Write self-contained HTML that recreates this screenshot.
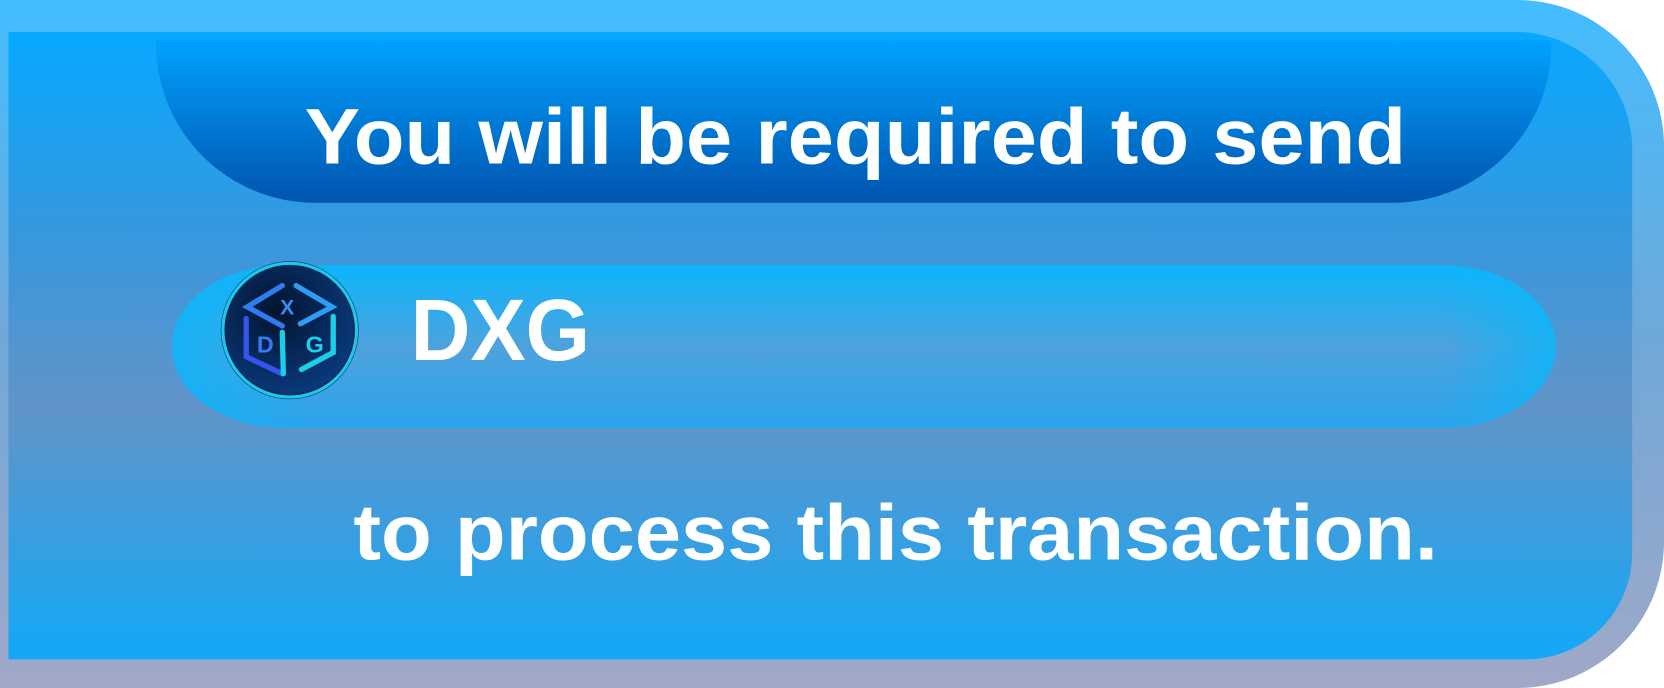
<!DOCTYPE html>
<html><head><meta charset="utf-8"><style>
html,body{margin:0;padding:0;width:1664px;height:688px;overflow:hidden;background:#fff}
svg{display:block}
</style></head><body>
<svg width="1664" height="688" viewBox="0 0 1568 648" preserveAspectRatio="none" xmlns="http://www.w3.org/2000/svg">
<defs>
<linearGradient id="outer" x1="0" y1="0" x2="0" y2="1">
<stop offset="0" stop-color="#43bdff"/><stop offset="0.5" stop-color="#70a8d8"/><stop offset="1" stop-color="#a0a8c8"/>
</linearGradient>
<linearGradient id="inner" x1="0" y1="0" x2="0" y2="1">
<stop offset="0" stop-color="#07a8ff"/><stop offset="0.35" stop-color="#3a97dc"/><stop offset="0.6" stop-color="#6194c8"/><stop offset="1" stop-color="#12a8f8"/>
</linearGradient>
<linearGradient id="top" x1="0" y1="0" x2="0" y2="1">
<stop offset="0" stop-color="#00a2ff"/><stop offset="1" stop-color="#0054ae"/>
</linearGradient>
<linearGradient id="pill" x1="0" y1="0" x2="0" y2="1">
<stop offset="0" stop-color="#0bb5fc"/><stop offset="0.5" stop-color="#4ea2dc"/><stop offset="1" stop-color="#2aa4ec"/>
</linearGradient>
<linearGradient id="pillL" x1="0" y1="0" x2="1" y2="0">
<stop offset="0" stop-color="#0ab6fc" stop-opacity="0.8"/><stop offset="0.1" stop-color="#0ab6fc" stop-opacity="0"/><stop offset="0.92" stop-color="#0ab6fc" stop-opacity="0"/><stop offset="1" stop-color="#0ab6fc" stop-opacity="0.8"/>
</linearGradient>
<radialGradient id="coin" cx="0.4" cy="0.35" r="0.7">
<stop offset="0" stop-color="#03142e"/><stop offset="1" stop-color="#0a3a80"/>
</radialGradient>
</defs>
<path d="M0 0 H1430 A138 138 0 0 1 1568 138 V510 A138 138 0 0 1 1430 648 H0 Z" fill="url(#outer)"/>
<path d="M8 30 H1428 A110 110 0 0 1 1538 140 V521 A100 100 0 0 1 1438 621 H8 Z" fill="url(#inner)"/>
<path d="M147 38 H1462 V42 A150 150 0 0 1 1312 191 H297 A150 150 0 0 1 147 42 Z" fill="url(#top)"/>
<rect x="162" y="250" width="1304" height="153" rx="105" ry="77" fill="url(#pill)"/>
<rect x="162" y="250" width="1304" height="153" rx="105" ry="77" fill="url(#pillL)"/>
<g font-family="Liberation Sans, sans-serif" font-weight="bold" fill="#fff">
<text x="287" y="154" font-size="74" textLength="1038" lengthAdjust="spacingAndGlyphs">You will be required to send</text>
<text x="333" y="527" font-size="74" textLength="1022" lengthAdjust="spacingAndGlyphs">to process this transaction.</text>
<text x="387" y="339" font-size="82" textLength="169" lengthAdjust="spacingAndGlyphs">DXG</text>
</g>
<circle cx="273" cy="311" r="65" fill="#0a2a55"/>
<circle cx="273" cy="311" r="63" fill="none" stroke="#1cc8f0" stroke-width="3"/>
<circle cx="273" cy="311" r="60" fill="url(#coin)"/>
<g fill="none" stroke-linecap="round" stroke-width="5">
<path d="M266 269 L233 289 L266 307" stroke="#2f7cf0"/>
<path d="M279 269 L313 289 L283 305" stroke="#2f9cf4"/>
<path d="M232 300 L232 336 L266 352" stroke="#3456ee"/>
<path d="M266 313 L267 352" stroke="#1ad0e8"/>
<path d="M314 298 L314 332 L284 348" stroke="#1ad0e8"/>
</g>
<g font-family="Liberation Sans, sans-serif" font-weight="bold">
<text x="264" y="296" fill="#3a8cf4" font-size="20">X</text>
<text x="242" y="332" fill="#3a78f0" font-size="22">D</text>
<text x="288" y="332" fill="#20d0e8" font-size="22">G</text>
</g>
</svg>
</body></html>
